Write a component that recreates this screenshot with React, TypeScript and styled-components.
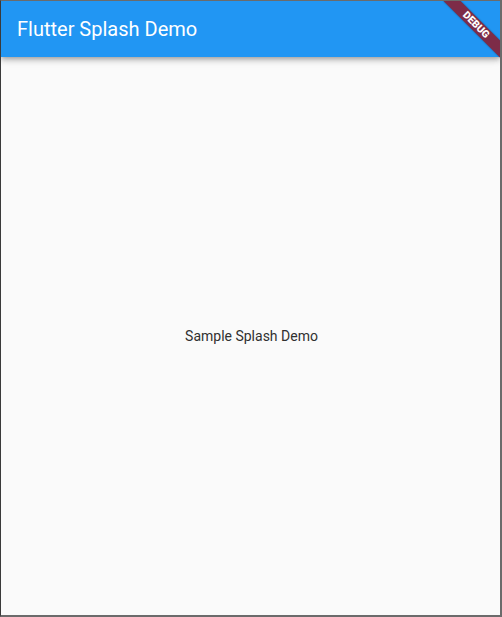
import React from "react";
import styled, { createGlobalStyle } from "styled-components";

const Global = createGlobalStyle`
  html, body { margin: 0; padding: 0; background: #fafafa; }
  #root { width: 502px; height: 617px; }
`;

const Frame = styled.div`
  box-sizing: border-box;
  width: 502px;
  height: 617px;
  border-top: 1px solid #6b6b6b;
  border-left: 1px solid #3a3a3a;
  border-right: 2px solid #6b6b6b;
  border-bottom: 2px solid #6b6b6b;
  display: flex;
  flex-direction: column;
  position: relative;
  overflow: hidden;
  background: #fafafa;
  font-family: Roboto, "Noto Sans", sans-serif;
`;

const AppBar = styled.header`
  flex: 0 0 56px;
  height: 56px;
  background: #2196f3;
  display: flex;
  align-items: center;
  padding-left: 16px;
  box-shadow: 0 2px 4px -1px rgba(0, 0, 0, 0.2), 0 4px 5px 0 rgba(0, 0, 0, 0.14),
    0 1px 10px 0 rgba(0, 0, 0, 0.12);
  position: relative;
  z-index: 1;
`;

const Title = styled.h1`
  margin: 0;
  color: #ffffff;
  font-size: 20px;
  font-weight: 400;
  letter-spacing: 0;
`;

const Body = styled.main`
  flex: 1;
  display: flex;
  align-items: center;
  justify-content: center;
`;

const Label = styled.span`
  font-size: 14px;
  color: #303030;
  letter-spacing: 0;
  padding-left: 2px;
`;

const Banner = styled.div`
  position: absolute;
  left: 435px;
  top: 18px;
  width: 80px;
  height: 12px;
  transform: rotate(45deg);
  background: #7d2c48;
  box-shadow: 0 0 2px rgba(0, 0, 0, 0.4);
  color: #ffffff;
  font-family: Roboto, "Noto Sans", sans-serif;
  font-size: 10.2px;
  font-weight: 900;
  line-height: 12px;
  text-align: center;
  z-index: 2;
`;

export default function App() {
  return (
    <>
      <Global />
      <Frame>
        <AppBar>
          <Title>Flutter Splash Demo</Title>
        </AppBar>
        <Body>
          <Label>Sample Splash Demo</Label>
        </Body>
        <Banner>DEBUG</Banner>
      </Frame>
    </>
  );
}
